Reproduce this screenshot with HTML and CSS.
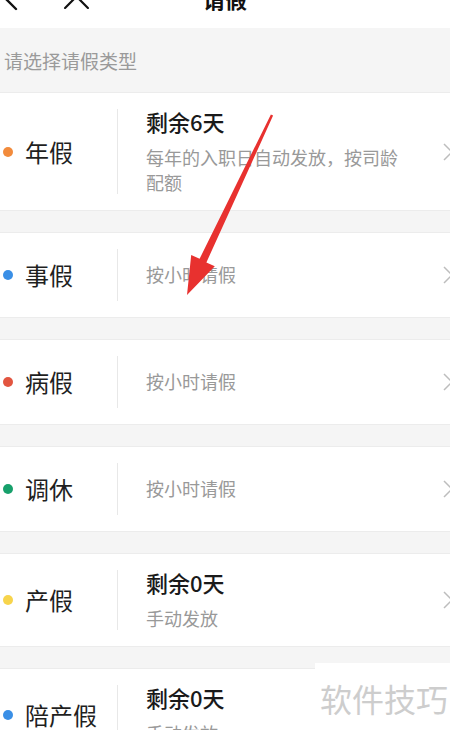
FILE: index.html
```html
<!DOCTYPE html>
<html lang="zh-CN">
<head>
<meta charset="utf-8">
<title>请假</title>
<link rel="stylesheet" href="styles.css">
</head>
<body>
<div class="page">
  <header class="nav">
    <div class="nav-left">
      <svg class="icon-back" width="20" height="26" viewBox="0 0 20 26"><polyline points="15,2 4,13 15,24" fill="none" stroke="#111" stroke-width="2.4" stroke-linecap="round" stroke-linejoin="round"/></svg>
      <svg class="icon-close" width="27" height="27" viewBox="0 0 26 26"><path d="M2 2 L24 24 M24 2 L2 24" fill="none" stroke="#111" stroke-width="2.1" stroke-linecap="round"/></svg>
    </div>
    <h1 class="nav-title">请假</h1>
    <div class="nav-right"></div>
  </header>

  <div class="hint">请选择请假类型</div>

  <div class="list">
    <div class="card">
      <div class="card-left"><span class="dot dot-orange"></span><span class="name">年假</span></div>
      <div class="card-body">
        <div class="card-title">剩余6天</div>
        <div class="card-desc">每年的入职日自动发放，按司龄配额</div>
      </div>
      <svg class="chev" width="10" height="18" viewBox="0 0 10 18"><polyline points="1,1 9,9 1,17" fill="none" stroke="#bdbdbd" stroke-width="1.5"/></svg>
    </div>

    <div class="card">
      <div class="card-left"><span class="dot dot-blue"></span><span class="name">事假</span></div>
      <div class="card-body">
        <div class="card-desc">按小时请假</div>
      </div>
      <svg class="chev" width="10" height="18" viewBox="0 0 10 18"><polyline points="1,1 9,9 1,17" fill="none" stroke="#bdbdbd" stroke-width="1.5"/></svg>
    </div>

    <div class="card">
      <div class="card-left"><span class="dot dot-red"></span><span class="name">病假</span></div>
      <div class="card-body">
        <div class="card-desc">按小时请假</div>
      </div>
      <svg class="chev" width="10" height="18" viewBox="0 0 10 18"><polyline points="1,1 9,9 1,17" fill="none" stroke="#bdbdbd" stroke-width="1.5"/></svg>
    </div>

    <div class="card">
      <div class="card-left"><span class="dot dot-green"></span><span class="name">调休</span></div>
      <div class="card-body">
        <div class="card-desc">按小时请假</div>
      </div>
      <svg class="chev" width="10" height="18" viewBox="0 0 10 18"><polyline points="1,1 9,9 1,17" fill="none" stroke="#bdbdbd" stroke-width="1.5"/></svg>
    </div>

    <div class="card">
      <div class="card-left"><span class="dot dot-yellow"></span><span class="name">产假</span></div>
      <div class="card-body">
        <div class="card-title">剩余0天</div>
        <div class="card-desc">手动发放</div>
      </div>
      <svg class="chev" width="10" height="18" viewBox="0 0 10 18"><polyline points="1,1 9,9 1,17" fill="none" stroke="#bdbdbd" stroke-width="1.5"/></svg>
    </div>

    <div class="card">
      <div class="card-left"><span class="dot dot-blue"></span><span class="name">陪产假</span></div>
      <div class="card-body">
        <div class="card-title">剩余0天</div>
        <div class="card-desc">手动发放</div>
      </div>
      <svg class="chev" width="10" height="18" viewBox="0 0 10 18"><polyline points="1,1 9,9 1,17" fill="none" stroke="#bdbdbd" stroke-width="1.5"/></svg>
    </div>
  </div>

  <svg class="arrow" width="450" height="730" viewBox="0 0 450 730">
    <polygon points="270.9,114.4 273.1,115.6 206.4,262.4 214.8,266.2 187,295 191.2,255 199.6,258.8" fill="#e8312f"/>
  </svg>

  <div class="watermark">软件技巧</div>
</div>
</body>
</html>
```

FILE: styles.css
```css
html, body {
  margin: 0;
  padding: 0;
  overflow: hidden;
  background: #f5f5f5;
}

body {
  font-family: "Noto Sans CJK SC", "Noto Sans", sans-serif;
  color: #1f1f1f;
}

.page {
  position: relative;
  width: 450px;
  height: 730px;
  overflow: hidden;
}

.nav {
  height: 58px;
  margin-top: -30px;
  background: #fff;
  display: grid;
  grid-template-columns: 1fr auto 1fr;
  align-items: center;
}

.nav-left {
  display: flex;
  align-items: center;
  gap: 42px;
}

.icon-back {
  margin-left: 1px;
  margin-top: -2px;
}

.icon-close {
  margin-top: -6px;
}

.nav-title {
  margin: -3px 0 0;
  font-size: 22px;
  font-weight: 700;
  line-height: 30px;
  color: #111;
}

.hint {
  height: 64px;
  box-sizing: border-box;
  padding: 19px 0 0 4px;
  font-size: 19px;
  line-height: 27px;
  color: #9a9a9a;
}

.list {
  display: flex;
  flex-direction: column;
  gap: 21px;
}

.card {
  background: #fff;
  border-top: 1px solid #ececec;
  border-bottom: 1px solid #ececec;
  display: flex;
  align-items: center;
  min-height: 86px;
  box-sizing: border-box;
}

.card-left {
  width: 117px;
  align-self: stretch;
  margin: 16px 0;
  border-right: 1px solid #e8e8e8;
  display: flex;
  align-items: center;
  gap: 12px;
  flex: none;
}

.dot {
  width: 10px;
  height: 10px;
  border-radius: 50%;
  margin-left: 3px;
  flex: none;
}

.dot-orange { background: #f28b3c; }
.dot-blue { background: #3a8fe6; }
.dot-red { background: #e25540; }
.dot-green { background: #17a06b; }
.dot-yellow { background: #f7d44c; }

.name {
  font-size: 24px;
  line-height: 32px;
  color: #1f1f1f;
}

.card-body {
  flex: 1;
  padding: 13px 30px 15px 28px;
  min-width: 0;
}

.card-title {
  font-size: 22px;
  font-weight: 500;
  line-height: 30px;
  color: #1a1a1a;
  margin-bottom: 9px;
}

.card-desc {
  font-size: 18px;
  line-height: 25px;
  color: #999;
}

.chev {
  flex: none;
  margin-right: -3px;
}

.arrow {
  position: absolute;
  left: 0;
  top: 0;
  pointer-events: none;
}

.watermark {
  position: absolute;
  left: 315px;
  top: 663px;
  width: 135px;
  height: 80px;
  box-sizing: border-box;
  background: #fff;
  padding: 15px 0 0 5px;
  font-size: 32px;
  line-height: 40px;
  color: #cdcdcd;
  white-space: nowrap;
}
```
